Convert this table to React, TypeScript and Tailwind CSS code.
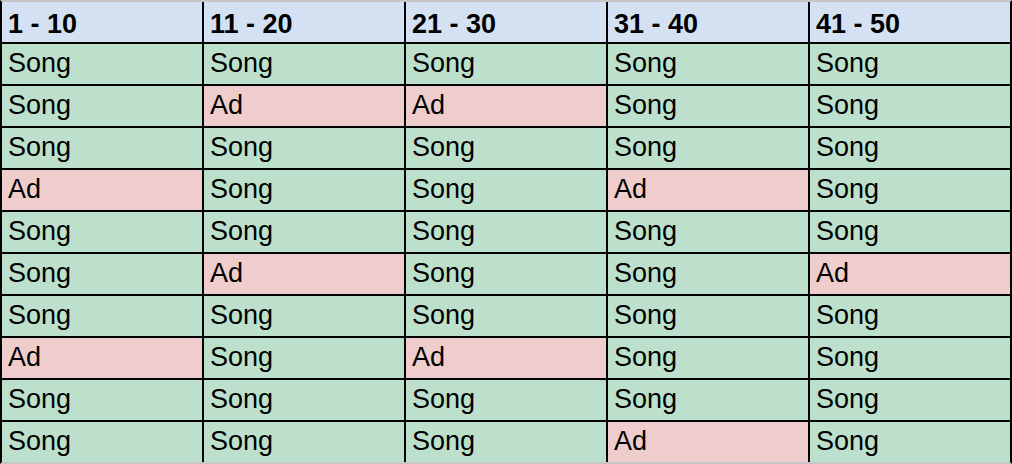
const headers = ['1 - 10', '11 - 20', '21 - 30', '31 - 40', '41 - 50'];

const rows: string[][] = [
  ['Song', 'Song', 'Song', 'Song', 'Song'],
  ['Song', 'Ad', 'Ad', 'Song', 'Song'],
  ['Song', 'Song', 'Song', 'Song', 'Song'],
  ['Ad', 'Song', 'Song', 'Ad', 'Song'],
  ['Song', 'Song', 'Song', 'Song', 'Song'],
  ['Song', 'Ad', 'Song', 'Song', 'Ad'],
  ['Song', 'Song', 'Song', 'Song', 'Song'],
  ['Ad', 'Song', 'Ad', 'Song', 'Song'],
  ['Song', 'Song', 'Song', 'Song', 'Song'],
  ['Song', 'Song', 'Song', 'Ad', 'Song'],
];

export default function App() {
  return (
    <div className="w-[1012px] h-[464px] bg-white font-['Liberation_Sans',Arial,sans-serif] text-[27px] text-black">
      <div className="border-t-2 border-b-2 border-t-[#c6c6c6] border-b-[#c6c6c6] border-x-2 border-x-black bg-black">
        <div className="grid grid-cols-[repeat(5,200px)] gap-[2px]">
          {headers.map((h) => (
            <div key={h} className="h-10 bg-[#d4e1f3] pl-[6px] pt-[4px] leading-[36px] font-bold">
              {h}
            </div>
          ))}
          {rows.map((row, i) =>
            row.map((cell, j) => (
              <div
                key={`${i}-${j}`}
                className={
                  cell === 'Ad'
                    ? 'h-10 bg-[#efcdcc] pl-[6px] leading-[39px]'
                    : 'h-10 bg-[#bde0cd] pl-[6px] leading-[39px]'
                }
              >
                {cell}
              </div>
            ))
          )}
        </div>
      </div>
    </div>
  );
}
